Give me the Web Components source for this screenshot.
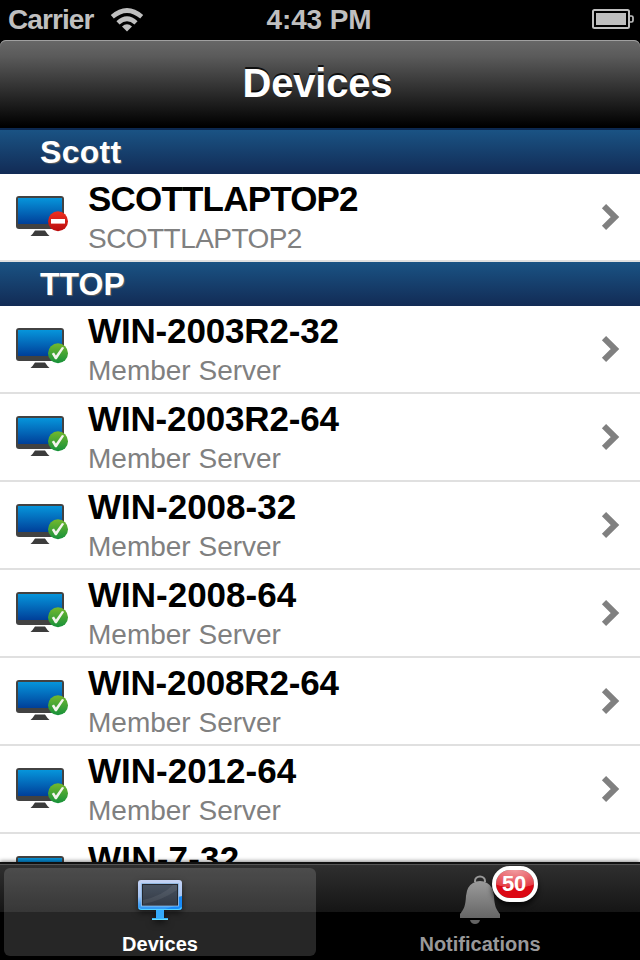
<!DOCTYPE html>
<html lang="en">
<head>
<meta charset="utf-8">
<title>Devices</title>
<style>
    html, body {
        margin: 0;
        height: 100%;
        background: #000;
        overflow: hidden;
        font-family: "Liberation Sans", Arial, sans-serif;
    }
</style>
</head>
<body>
<phone-app></phone-app>

<script>
class StatusBar extends HTMLElement {

    constructor() {
        super();
        this.attachShadow({mode: 'open'});
    }

    connectedCallback() {
        this.shadowRoot.innerHTML = `
            <style>
                :host {
                    display: grid;
                    grid-template-columns: 1fr auto 1fr;
                    align-items: center;
                    height: 40px;
                    box-sizing: border-box;
                    padding: 0 6px 0 8px;
                    background: #000;
                    color: #bfbfbf;
                    font-size: 28px;
                    font-weight: bold;
                    line-height: 40px;
                }

                .carrier {
                    display: flex;
                    align-items: center;
                    gap: 16px;
                    letter-spacing: -0.9px;
                }

                .time {
                    margin-right: 4px;
                    letter-spacing: -0.1px;
                }

                .battery {
                    justify-self: end;
                    margin-bottom: 2px;
                }

                svg {
                    display: block;
                }
            </style>
            <div class="carrier">
                <span>Carrier</span>
                <svg width="34" height="26" viewBox="0 0 34 26">
                    <g fill="none" stroke="#bfbfbf" stroke-width="4.6">
                        <path d="M2.3 9.8Q17 -2.800 31.7 9.8"/>
                        <path d="M8 15.9Q17 7.6 26 15.9"/>
                    </g>
                    <path d="M17 24.500L12 19.500Q17 14.800 22 19.500Z" fill="#bfbfbf"/>
                </svg>
            </div>
            <div class="time">4:43 PM</div>
            <svg class="battery" width="42" height="22" viewBox="0 0 42 22">
                <rect x="1" y="2" width="36" height="18" rx="1.5" fill="none" stroke="#bfbfbf" stroke-width="2"/>
                <rect x="4" y="5" width="30" height="12" fill="#bfbfbf"/>
                <path d="M38 8H39.5Q41 8 41 9.5V12.5Q41 14 39.5 14H38" fill="none" stroke="#bfbfbf" stroke-width="1.7"/>
            </svg>
        `;
    }
}

class NavBar extends HTMLElement {

    constructor() {
        super();
        this.attachShadow({mode: 'open'});
    }

    connectedCallback() {
        this.shadowRoot.innerHTML = `
            <style>
                :host {
                    display: flex;
                    align-items: center;
                    justify-content: center;
                    height: 88px;
                    box-sizing: border-box;
                    border-radius: 6px 6px 0 0;
                    background: linear-gradient(#686868, #5b5b5b 18%, #000 98%);
                    box-shadow: inset 0 1px 0 #a0a0a0;
                    color: #fff;
                    font-size: 40px;
                    font-weight: bold;
                    text-shadow: 0 -2px 0 rgba(0, 0, 0, 0.8);
                }

                h1 {
                    margin: 0 0 2px -5px;
                    font: inherit;
                    letter-spacing: -0.2px;
                }
            </style>
            <h1><slot></slot></h1>
        `;
    }
}

class SectionHeader extends HTMLElement {

    constructor() {
        super();
        this.attachShadow({mode: 'open'});
    }

    connectedCallback() {
        this.shadowRoot.innerHTML = `
            <style>
                :host {
                    display: block;
                    height: 44px;
                    padding-left: 40px;
                    background: linear-gradient(#1a5384, #122b55);
                    color: #fff;
                    font-size: 32px;
                    font-weight: bold;
                    line-height: 44px;
                    letter-spacing: var(--tracking, 0);
                    text-shadow: 1px 1px 1px #626262;
                }

                :host([first]) {
                    border-top: 2px solid #0b2850;
                }
            </style>
            <slot></slot>
        `;
    }
}

class DeviceIcon extends HTMLElement {

    constructor() {
        super();
        this.attachShadow({mode: 'open'});
    }

    connectedCallback() {
        const offline = this.getAttribute('status') === 'offline';
        const mark = offline
            ? '<rect x="35" y="23" width="14" height="4.6" fill="#fff"/>'
            : '<path d="M35.8 25.8L38 24.4L39.9 27.6L46 19L48.2 19.8L40.7 31.2H39Z" fill="#f4f4ee"/>';

        this.shadowRoot.innerHTML = `
            <style>
                :host, svg {
                    display: block;
                }
            </style>
            <svg width="52" height="42" viewBox="0 0 52 42">
                <defs>
                    <linearGradient id="screen" x1="0" y1="0" x2="0" y2="1">
                        <stop offset="0" stop-color="#0695db"/>
                        <stop offset="1" stop-color="#003f99"/>
                    </linearGradient>
                    <linearGradient id="badge" x1="0" y1="0" x2="0" y2="1">
                        <stop offset="0" stop-color="${offline ? '#ee3020' : '#73b82e'}"/>
                        <stop offset="1" stop-color="${offline ? '#b90c0d' : '#16913a'}"/>
                    </linearGradient>
                </defs>
                <path d="M19 34.5H29L31.5 38L33.5 40H14.5L16.5 38Z" fill="#3c3c3c"/>
                <rect width="48" height="33" rx="3" fill="#424242"/>
                <rect x="2" y="2" width="44" height="26" fill="url(#screen)"/>
                <circle cx="42" cy="25.3" r="10" fill="url(#badge)"/>
                ${mark}
            </svg>
        `;
    }
}

class DeviceRow extends HTMLElement {

    constructor() {
        super();
        this.attachShadow({mode: 'open'});
    }

    connectedCallback() {
        this.shadowRoot.innerHTML = `
            <style>
                :host {
                    display: grid;
                    grid-template-columns: 52px 1fr 20px;
                    column-gap: 20px;
                    height: 88px;
                    box-sizing: border-box;
                    padding: 0 20px 0 16px;
                    border-bottom: 2px solid #e0e0e0;
                    background: #fff;
                }

                device-icon {
                    margin-top: 22px;
                }

                .name {
                    margin-top: 5px;
                    color: #000;
                    font-size: 35px;
                    font-weight: bold;
                    line-height: 40px;
                    letter-spacing: var(--tracking, 0);
                    white-space: nowrap;
                }

                .role {
                    color: #808080;
                    font-size: 28px;
                    line-height: 40px;
                    letter-spacing: var(--role-tracking, 0);
                }

                .chevron {
                    display: block;
                    margin-top: 29px;
                }
            </style>
            <device-icon status="${this.getAttribute('status')}"></device-icon>
            <div>
                <div class="name"><slot></slot></div>
                <div class="role"><slot name="role"></slot></div>
            </div>
            <svg class="chevron" width="20" height="28" viewBox="0 0 20 28">
                <path d="M4 3.2L15 14L4 24.8" fill="none" stroke="#808080" stroke-width="6"/>
            </svg>
        `;
    }
}

class TabItem extends HTMLElement {

    constructor() {
        super();
        this.attachShadow({mode: 'open'});
    }

    connectedCallback() {
        this.shadowRoot.innerHTML = `
            <style>
                :host {
                    display: flex;
                    flex-direction: column;
                    align-items: center;
                    height: 88px;
                    border-radius: 6px;
                    color: #999;
                    font-size: 20px;
                    font-weight: bold;
                    letter-spacing: var(--tracking, 0);
                }

                :host([selected]) {
                    background: rgba(255, 255, 255, 0.15);
                    color: #fff;
                }

                .icon {
                    position: relative;
                    height: 66px;
                }

                .label {
                    line-height: 24px;
                }

                ::slotted(svg) {
                    display: block;
                }
            </style>
            <div class="icon"><slot name="icon"></slot><slot name="badge"></slot></div>
            <div class="label"><slot></slot></div>
        `;
    }
}

class CountBadge extends HTMLElement {

    constructor() {
        super();
        this.attachShadow({mode: 'open'});
    }

    connectedCallback() {
        this.shadowRoot.innerHTML = `
            <style>
                :host {
                    position: absolute;
                    left: 32px;
                    top: -2px;
                    width: 46px;
                    height: 36px;
                    box-sizing: border-box;
                    border: 4px solid #fff;
                    border-radius: 18px;
                    background:
                        radial-gradient(ellipse 34px 18px at 50% 0, rgba(255, 255, 255, 0.6), rgba(255, 255, 255, 0.22) 96%, transparent 100%),
                        #dc0814;
                    background-clip: padding-box;
                    box-shadow: 0 4px 5px rgba(0, 0, 0, 0.7);
                    color: #fff;
                    font-size: 22px;
                    line-height: 27px;
                    letter-spacing: -0.2px;
                    text-align: center;
                }

                slot {
                    display: block;
                    margin-left: -2px;
                }
            </style>
            <slot></slot>
        `;
    }
}

class TabBar extends HTMLElement {

    constructor() {
        super();
        this.attachShadow({mode: 'open'});
    }

    connectedCallback() {
        this.shadowRoot.innerHTML = `
            <style>
                :host {
                    position: relative;
                    display: grid;
                    grid-template-columns: 312px 312px;
                    column-gap: 8px;
                    height: 98px;
                    box-sizing: border-box;
                    padding: 4px 4px 0;
                    border-top: 2px solid #111;
                    background: linear-gradient(#555 0 1px, #2f2f2f 1px, #151515 48px, #000 48px);
                    box-shadow: 0 -1px 4px rgba(0, 0, 0, 0.45);
                }
            </style>
            <slot></slot>
        `;
    }
}

class PhoneApp extends HTMLElement {

    constructor() {
        super();
        this.attachShadow({mode: 'open'});
    }

    connectedCallback() {
        this.shadowRoot.innerHTML = `
            <style>
                :host {
                    display: flex;
                    flex-direction: column;
                    width: 640px;
                    height: 960px;
                    overflow: hidden;
                }

                status-bar, nav-bar, tab-bar {
                    flex: none;
                }

                main {
                    flex: 1;
                    min-height: 0;
                    overflow: hidden;
                    background: #fff;
                }

                tab-item svg {
                    overflow: visible;
                }
            </style>
            <status-bar></status-bar>
            <nav-bar>Devices</nav-bar>
            <main>
                <section-header first style="--tracking: 0.3px">Scott</section-header>
                <device-row status="offline" style="--tracking: -0.8px; --role-tracking: -0.55px">SCOTTLAPTOP2<span slot="role">SCOTTLAPTOP2</span></device-row>
                <section-header>TTOP</section-header>
                ${this._renderServers()}
            </main>
            <tab-bar>
                <tab-item selected style="--tracking: 0.05px">
                    <svg slot="icon" width="46" height="58" viewBox="0 0 46 58">
                        <defs>
                            <linearGradient id="frame" x1="0" y1="0" x2="0" y2="1">
                                <stop offset="0" stop-color="#c5d3f4"/>
                                <stop offset="0.55" stop-color="#a5c4f2"/>
                                <stop offset="0.8" stop-color="#4ca3f5"/>
                                <stop offset="1" stop-color="#2895f5"/>
                            </linearGradient>
                            <linearGradient id="glass" x1="0" y1="0" x2="0" y2="1">
                                <stop offset="0" stop-color="#46515f"/>
                                <stop offset="1" stop-color="#343a45"/>
                            </linearGradient>
                        </defs>
                        <g style="filter: drop-shadow(0 3px 3px rgba(0, 0, 0, 0.55))">
                            <path d="M19 42H27V50H31V52H15V50H19Z" fill="#35aafa"/>
                            <path d="M15 51.4H31" stroke="#63ddff" stroke-width="1.2"/>
                            <rect x="1" y="12" width="44" height="30" rx="3" fill="url(#frame)"/>
                        </g>
                        <path d="M41 29L45 28V39Q45 42 42 42H25L41 37Z" fill="#168af8"/>
                        <path d="M2 40Q3 41.5 5 41.5H41Q43.5 41.5 44.5 39.5" fill="none" stroke="#55d2ff" stroke-width="1.2"/>
                        <rect x="4.5" y="15.5" width="37" height="22.5" fill="#23272e" stroke="#9bc8f5" stroke-width="0.8"/>
                        <rect x="6" y="17" width="34" height="20" fill="url(#glass)"/>
                        <path d="M6 32Q25 28 36 17H40V22Q24 33 6 36Z" fill="#fff" opacity="0.07"/>
                    </svg>
                    Devices
                </tab-item>
                <tab-item>
                    <svg slot="icon" width="40" height="58" viewBox="0 0 40 58">
                        <defs>
                            <linearGradient id="bell" x1="0" y1="0" x2="0" y2="1">
                                <stop offset="0" stop-color="#9b9b9b"/>
                                <stop offset="1" stop-color="#666"/>
                            </linearGradient>
                        </defs>
                        <path d="M15 14V13A5 4.5 0 0 1 25 13V14" fill="none" stroke="#999" stroke-width="2"/>
                        <path d="M13 15Q16 13 20 13Q24 13 27 15Q33 18 34 28C34.500 38 36 41 40 46V50H0V46C4 41 5.500 38 6 28Q7 18 13 15Z" fill="url(#bell)"/>
                        <path d="M10 52H20Q19 56 15 56Q11 56 10 52Z" fill="#636363"/>
                    </svg>
                    <count-badge slot="badge">50</count-badge>
                    Notifications
                </tab-item>
            </tab-bar>
        `;
    }

    _renderServers() {
        const servers = [
            {name: 'WIN-2003R2-32', tracking: '-0.15px'},
            {name: 'WIN-2003R2-64', tracking: '-0.15px'},
            {name: 'WIN-2008-32', tracking: '0'},
            {name: 'WIN-2008-64', tracking: '0'},
            {name: 'WIN-2008R2-64', tracking: '-0.15px'},
            {name: 'WIN-2012-64', tracking: '0'},
            {name: 'WIN-7-32', tracking: '0.2px'}
        ];
        return servers.map(({name, tracking}) => `
            <device-row status="online" style="--tracking: ${tracking}">${name}<span slot="role">Member Server</span></device-row>
        `).join('');
    }
}

customElements.define('status-bar', StatusBar);
customElements.define('nav-bar', NavBar);
customElements.define('section-header', SectionHeader);
customElements.define('device-icon', DeviceIcon);
customElements.define('device-row', DeviceRow);
customElements.define('tab-item', TabItem);
customElements.define('count-badge', CountBadge);
customElements.define('tab-bar', TabBar);
customElements.define('phone-app', PhoneApp);
</script>
</body>
</html>
